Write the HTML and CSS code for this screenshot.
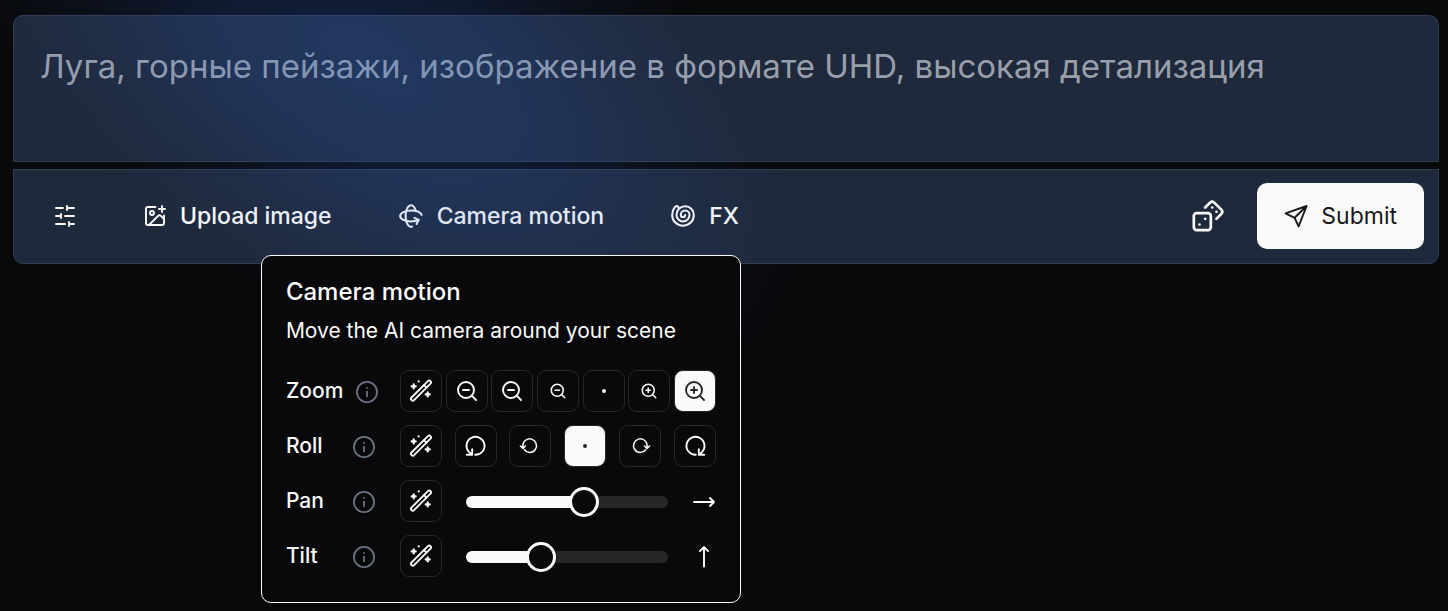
FILE: index.html
```html
<!DOCTYPE html>
<html lang="en">
<head>
	<meta charset="UTF-8">
	<meta name="viewport" content="width=device-width, initial-scale=1">
	<title>Camera motion</title>
	<link rel="stylesheet" href="styles.css">
</head>
<body>
	<!-- shared icons -->
	<svg class="sprite" aria-hidden="true">
		<symbol id="wand" viewBox="0 0 24 24">
			<g transform="rotate(-45 12 11.6)">
				<rect x="-1.4" y="9.8" width="26.8" height="3.6" rx="1.8"/>
				<path d="M18 9.8v3.6"/>
			</g>
			<path class="thick" d="M4.7 5.4v4M2.7 7.4h4M18.7 13.4v4M16.7 15.4h4M9.7 2.4h.01"/>
		</symbol>
		<symbol id="info" viewBox="0 0 24 24">
			<circle cx="12" cy="12" r="11"/>
			<path d="M12 11.5v5M12 7.5h.01"/>
		</symbol>
		<symbol id="zoom-out" viewBox="0 0 24 24">
			<circle cx="11" cy="11" r="8"/>
			<path d="m21 21-4.35-4.35M8 11h6"/>
		</symbol>
		<symbol id="zoom-in" viewBox="0 0 24 24">
			<circle cx="11" cy="11" r="8"/>
			<path d="m21 21-4.35-4.35M8 11h6M11 8v6"/>
		</symbol>
		<symbol id="roll-far" viewBox="0 0 24 24">
			<path d="M11.2 20.8A9 9 0 1 0 5.2 18.2L7.8 20.4M2.8 20.8h5.4v-5.6"/>
		</symbol>
		<symbol id="roll-near" viewBox="0 0 24 24">
			<path class="thin" d="M6.3 15.8A6.8 6.8 0 1 0 4.9 11.8v2.4M2.4 12l2.5 2.4 2.5-2.4"/>
		</symbol>
		<symbol id="dot" viewBox="0 0 24 24">
			<circle class="fill" cx="12" cy="12" r="2"/>
		</symbol>
	</svg>

	<div class="glow"></div>

	<form class="prompt">
		<textarea class="prompt-text" aria-label="Prompt" placeholder="Луга, горные пейзажи, изображение в формате UHD, высокая детализация"></textarea>

		<div class="toolbar">
			<button type="button" class="tool" aria-label="Settings">
				<svg class="icon" viewBox="0 0 24 24"><path d="M21 4h-7M10 4H3M21 12h-9M8 12H3M21 20h-5M12 20H3M14 2v4M8 10v4M16 18v4"/></svg>
			</button>
			<button type="button" class="tool">
				<svg class="icon" viewBox="0 0 24 24"><path d="M16 5h6M19 2v6M21 11.5V19a2 2 0 0 1-2 2H5a2 2 0 0 1-2-2V5a2 2 0 0 1 2-2h7.5"/><path d="m21 15-3.09-3.09a2 2 0 0 0-2.82 0L6 21"/><circle cx="9" cy="9" r="2"/></svg>
				Upload image
			</button>
			<div class="menu">
				<button type="button" class="tool" aria-expanded="true">
					<svg class="icon wide" viewBox="0 0 24 24"><path d="M16.47 7.5C15.64 4.24 13.95 2 12 2 9.24 2 7 6.48 7 12s2.24 10 5 10c.34 0 .68-.07 1-.2"/><path d="m15.19 13.71 3.82 1.86-1.86 3.81"/><path d="M19 15.57c-1.8.89-4.27 1.43-7 1.43-5.52 0-10-2.24-10-5s4.48-5 10-5c4.84 0 8.87 1.72 9.8 4"/></svg>
					Camera motion
				</button>

				<div class="popover">
					<h2>Camera motion</h2>
					<p>Move the AI camera around your scene</p>

					<div class="row">
						<div class="name"><span>Zoom</span><svg class="info"><use href="#info"/></svg></div>
						<div class="options" role="group" aria-label="Zoom">
							<button type="button" aria-label="Auto"><svg class="icon"><use href="#wand"/></svg></button>
							<button type="button" aria-label="Zoom out 3"><svg class="icon"><use href="#zoom-out"/></svg></button>
							<button type="button" aria-label="Zoom out 2"><svg class="icon"><use href="#zoom-out"/></svg></button>
							<button type="button" aria-label="Zoom out 1"><svg class="icon small"><use href="#zoom-out"/></svg></button>
							<button type="button" aria-label="No zoom"><svg class="icon"><use href="#dot"/></svg></button>
							<button type="button" aria-label="Zoom in 1"><svg class="icon small"><use href="#zoom-in"/></svg></button>
							<button type="button" aria-label="Zoom in 2" class="active" aria-pressed="true"><svg class="icon"><use href="#zoom-in"/></svg></button>
						</div>
					</div>

					<div class="row">
						<div class="name"><span>Roll</span><svg class="info"><use href="#info"/></svg></div>
						<div class="options" role="group" aria-label="Roll">
							<button type="button" aria-label="Auto"><svg class="icon"><use href="#wand"/></svg></button>
							<button type="button" aria-label="Roll left 2"><svg class="icon"><use href="#roll-far"/></svg></button>
							<button type="button" aria-label="Roll left 1"><svg class="icon"><use href="#roll-near"/></svg></button>
							<button type="button" aria-label="No roll" class="active" aria-pressed="true"><svg class="icon"><use href="#dot"/></svg></button>
							<button type="button" aria-label="Roll right 1"><svg class="icon flip"><use href="#roll-near"/></svg></button>
							<button type="button" aria-label="Roll right 2"><svg class="icon flip"><use href="#roll-far"/></svg></button>
						</div>
					</div>

					<div class="row">
						<div class="name"><label for="pan">Pan</label><svg class="info"><use href="#info"/></svg></div>
						<div class="options">
							<button type="button" aria-label="Auto pan"><svg class="icon"><use href="#wand"/></svg></button>
							<input type="range" id="pan" min="0" max="100" value="60" style="--value: 0.6">
							<svg class="icon" viewBox="0 0 24 24"><path d="M2 13h20M18 9l4 4-4 4"/></svg>
						</div>
					</div>

					<div class="row">
						<div class="name"><label for="tilt">Tilt</label><svg class="info"><use href="#info"/></svg></div>
						<div class="options">
							<button type="button" aria-label="Auto tilt"><svg class="icon"><use href="#wand"/></svg></button>
							<input type="range" id="tilt" min="0" max="100" value="35" style="--value: 0.35">
							<svg class="icon" viewBox="0 0 24 24"><path d="M12 22.6V3M8 7l4-4 4 4"/></svg>
						</div>
					</div>
				</div>
			</div>
			<button type="button" class="tool">
				<svg class="icon wide" viewBox="0 0 24 24"><path d="M14 11a2 2 0 1 1-4 0 4 4 0 0 1 8 0 6 6 0 0 1-12 0 8 8 0 0 1 16 0 10 10 0 1 1-20 0 11.93 11.93 0 0 1 2.42-7.22 2 2 0 1 1 3.16 2.44"/></svg>
				FX
			</button>

			<div class="right">
				<button type="button" class="tool" aria-label="Random prompt">
					<svg class="icon dice" viewBox="0 0 24 24"><rect x="2" y="10" width="12" height="12" rx="2"/><path d="m17.92 14 3.5-3.5a2.24 2.24 0 0 0 0-3l-5-4.92a2.24 2.24 0 0 0-3 0L10 6M6 18h.01M10 14h.01M15 6h.01M18 9h.01"/></svg>
				</button>
				<button type="submit" class="submit">
					<svg class="icon" viewBox="0 0 24 24"><path d="M22.6 2 1.6 9.4l9 4.4 4 8.6zM22.6 2l-12 11.8"/></svg>
					Submit
				</button>
			</div>
		</div>
	</form>

	<script>
		// keep the filled part of the track in step with the thumb
		var ranges=document.querySelectorAll("input[type=range]");
		for (var i = 0; i < ranges.length; i++) {
			ranges[i].oninput=function () {
				this.style.setProperty("--value",this.value/100);
			}
		}
	</script>
</body>
</html>
```

FILE: styles.css
```css
*{
	box-sizing: border-box;
}
body{
	margin: 0;
	min-height: 100vh;
	padding: 15px 9px 8px 13px;
	background: #08090b;
	color: #fafafa;
	font-family: Inter, "Noto Sans", sans-serif;
	position: relative;
	overflow: hidden;
}
button{
	font: inherit;
	color: inherit;
	background: none;
	border: 0;
	padding: 0;
	cursor: pointer;
}
.sprite{
	display: none;
}
/* blue light across the top left */
.glow{
	position: absolute;
	z-index: 1;
	left: -110px;
	top: -190px;
	width: 960px;
	height: 500px;
	transform: rotate(32deg);
	background: radial-gradient(closest-side, rgba(50, 105, 220, 0.23), rgba(50, 105, 220, 0.18) 35%, rgba(50, 105, 220, 0.07) 70%, rgba(50, 105, 220, 0));
	pointer-events: none;
}
.icon{
	width: 24px;
	height: 24px;
	flex: none;
	fill: none;
	stroke: currentColor;
	stroke-width: 1.9;
	stroke-linecap: round;
	stroke-linejoin: round;
}
.icon.wide{
	width: 26px;
	height: 26px;
}
.icon.small{
	width: 18px;
	height: 18px;
	stroke-width: 2.1;
}
.icon.dice{
	width: 34px;
	height: 34px;
}
.icon.flip{
	transform: scaleX(-1);
}
.fill{
	fill: currentColor;
	stroke: none;
}
.thick{
	stroke-width: 2.2;
}
.thin{
	stroke-width: 1.5;
}

.prompt{
	display: flex;
	flex-direction: column;
	gap: 7px;
}
.prompt-text,
.toolbar{
	background: #1e293b;
	border: 1px solid #303c50;
}
.prompt-text{
	display: block;
	width: 100%;
	height: 147px;
	padding: 26px;
	border-radius: 10px 10px 0 0;
	color: #fafafa;
	font: 33px/48px Inter, "Noto Sans", sans-serif;
	resize: none;
	outline: none;
}
.prompt-text::placeholder{
	color: #989fab;
	opacity: 1;
}
.toolbar{
	display: flex;
	align-items: center;
	gap: 66px;
	padding: 13px 14px 14px 39px;
	border-radius: 0 0 10px 10px;
	font-size: 23px;
	line-height: 32px;
}
.tool{
	display: flex;
	align-items: center;
	gap: 13px;
	font-weight: 500;
	white-space: nowrap;
}
.menu{
	position: relative;
}
.right{
	display: flex;
	align-items: center;
	gap: 32px;
	margin-left: auto;
}
.submit{
	display: flex;
	align-items: center;
	gap: 13px;
	height: 66px;
	padding: 0 27px;
	border-radius: 10px;
	background: #fafafa;
	color: #18181b;
}

.popover{
	position: absolute;
	z-index: 2;
	top: 55px;
	left: 50%;
	transform: translateX(-50%);
	width: 480px;
	padding: 20px 24px 25px;
	border: 1px solid #fafafa;
	border-radius: 10px;
	background: #09090b;
	font-size: 21px;
}
.popover h2{
	margin: 0;
	font-size: 24px;
	line-height: 32px;
	font-weight: 500;
}
.popover p{
	margin: 7px 0 24px;
	line-height: 31px;
}
.row{
	display: flex;
	align-items: center;
	margin-top: 13px;
}
.name{
	display: flex;
	align-items: center;
	gap: 13px;
	width: 114px;
	font-weight: 500;
}
.name span,
.name label{
	min-width: 54px;
}
.info{
	width: 22px;
	height: 22px;
	flex: none;
	margin-top: 2px;
	fill: none;
	stroke: #6b7280;
	stroke-width: 2;
	stroke-linecap: round;
}
.options{
	flex: 1;
	display: flex;
	align-items: center;
	justify-content: space-between;
}
.options button{
	display: flex;
	align-items: center;
	justify-content: center;
	width: 42px;
	height: 42px;
	border: 1px solid #27272a;
	border-radius: 9px;
}
.options .active{
	background: #fafafa;
	color: #27272a;
}
.options input{
	-webkit-appearance: none;
	appearance: none;
	flex: 1;
	min-width: 0;
	height: 12px;
	margin: 2px 24px 0;
	border-radius: 6px;
	background: linear-gradient(to right, #fafafa calc(15px + (100% - 30px) * var(--value)), #27272a 0);
}
.options input::-webkit-slider-thumb{
	-webkit-appearance: none;
	width: 30px;
	height: 30px;
	border: 3px solid #fafafa;
	border-radius: 50%;
	background: #09090b;
}
.options input::-moz-range-thumb{
	box-sizing: border-box;
	width: 30px;
	height: 30px;
	border: 3px solid #fafafa;
	border-radius: 50%;
	background: #09090b;
}
```
